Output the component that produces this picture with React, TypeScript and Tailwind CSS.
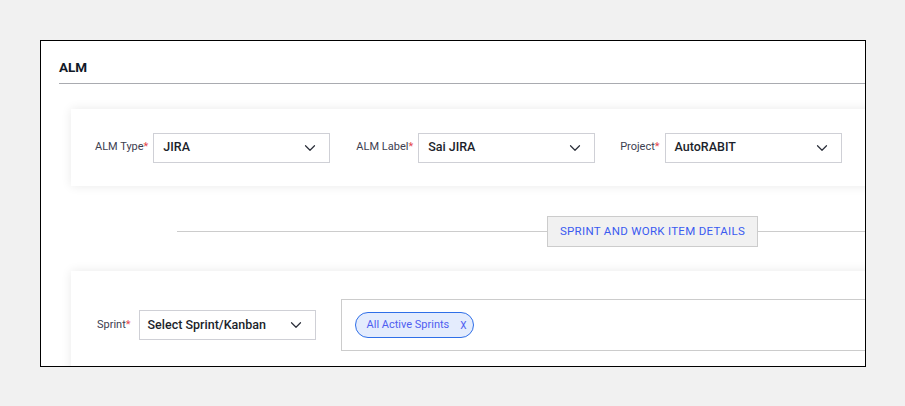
import React from "react";

const Chevron = () => (
  <svg width="18" height="18" viewBox="0 0 24 24" fill="none" stroke="#2b2f3a" strokeWidth="1.6" strokeLinecap="round" strokeLinejoin="round">
    <path d="m6 9 6 6 6-6" />
  </svg>
);

const Field = ({ label, value, gap }: { label: string; value: string; gap: string }) => (
  <div className="flex shrink-0 items-center">
    <span className={`text-[11px] text-[#3d4050] ${gap}`}>
      {label}
      <span className="text-[#e5484d]">*</span>
    </span>
    <div className="flex h-[30px] w-[177px] items-center justify-between border border-[#cfd0d6] bg-white pl-[9px] pr-[10px]">
      <span className="text-[12.5px] font-medium text-[#1c1f2b]">{value}</span>
      <Chevron />
    </div>
  </div>
);

export default function App() {
  return (
    <div className="h-[406px] w-[905px] bg-[#f1f1f1] pl-[40px] pt-[40px]" style={{ fontFamily: "Roboto, 'Noto Sans', sans-serif" }}>
      <div className="h-[327px] w-[826px] overflow-hidden border border-black bg-white">
        <div className="w-[1000px]">
          <div className="ml-[18px] h-[43px] w-[806px] border-b border-[#a9abb0] pt-[14px]">
            <span className="text-[13.5px] font-bold text-[#111827]">ALM</span>
          </div>
          <div className="ml-[30px] mt-[25px] flex h-[77px] w-[900px] items-center bg-white pl-[24px] shadow-[0_0_10px_rgba(0,0,0,0.09)]">
            <Field label="ALM Type" value="JIRA" gap="mr-[5px]" />
            <div className="w-[26px] shrink-0" />
            <Field label="ALM Label" value="Sai JIRA" gap="mr-[5px]" />
            <div className="w-[25px] shrink-0" />
            <Field label="Project" value="AutoRABIT" gap="mr-[5px]" />
          </div>
          <div className="ml-[136px] mt-[30px] flex h-[31px] items-center">
            <div className="h-px w-[370px] shrink-0 bg-[#cccccc]" />
            <div className="flex h-[31px] w-[211px] shrink-0 items-center justify-center border border-[#cccccc] bg-[#f1f1f1] text-[11.5px] tracking-[0.3px] text-[#3a5bf0]">
              SPRINT AND WORK ITEM DETAILS
            </div>
            <div className="h-px w-[300px] shrink-0 bg-[#cccccc]" />
          </div>
          <div className="ml-[30px] mt-[24px] flex h-[120px] w-[900px] items-start bg-white pl-[26px] shadow-[0_0_10px_rgba(0,0,0,0.09)]">
            <div className="mt-[39px] flex shrink-0 items-center">
              <span className="mr-[7px] text-[11px] text-[#3d4050]">
                Sprint<span className="text-[#e5484d]">*</span>
              </span>
              <div className="ml-[1px] flex h-[30px] w-[177px] items-center justify-between border border-[#cfd0d6] bg-white pl-[8px] pr-[10px]">
                <span className="text-[12.5px] font-medium text-[#1c1f2b]">Select Sprint/Kanban</span>
                <Chevron />
              </div>
            </div>
            <div className="ml-[25px] mt-[28px] flex h-[52px] w-[600px] shrink-0 items-center border border-[#cccccc] pl-[13px]">
              <div className="flex h-[26px] w-[119px] items-center rounded-full border border-[#2f6fe8] bg-[#e4ecfd] pl-[11px] text-[11px] text-[#4f5ef0]">
                All Active Sprints
                <span className="ml-[11px] text-[10px]">X</span>
              </div>
            </div>
          </div>
        </div>
      </div>
    </div>
  );
}
